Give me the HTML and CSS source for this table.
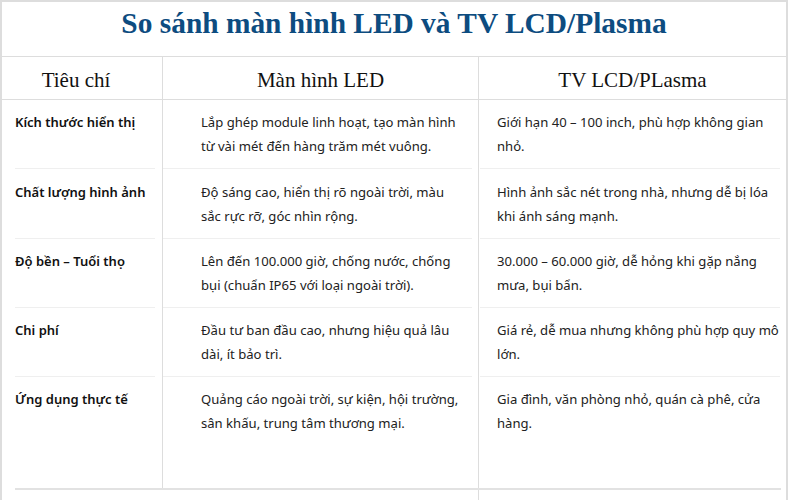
FILE: index.html
```html
<!DOCTYPE html>
<html lang="vi">
<head>
<meta charset="utf-8">
<title>So sánh màn hình LED và TV LCD/Plasma</title>
<link rel="stylesheet" href="styles.css">
</head>
<body>
<div class="table">
  <div class="title">So sánh màn hình LED và TV LCD/Plasma</div>

  <div class="head c1">Tiêu chí</div>
  <div class="head c2">Màn hình LED</div>
  <div class="head c3">TV LCD/PLasma</div>

  <div class="cell c1"><div class="in"><strong>Kích thước hiển thị</strong></div></div>
  <div class="cell c2"><div class="in">Lắp ghép module linh hoạt, tạo màn hình từ vài mét đến hàng trăm mét vuông.</div></div>
  <div class="cell c3"><div class="in">Giới hạn 40 – 100 inch, phù hợp không gian nhỏ.</div></div>

  <div class="cell c1"><div class="in"><strong>Chất lượng hình ảnh</strong></div></div>
  <div class="cell c2"><div class="in">Độ sáng cao, hiển thị rõ ngoài trời, màu sắc rực rỡ, góc nhìn rộng.</div></div>
  <div class="cell c3"><div class="in">Hình ảnh sắc nét trong nhà, nhưng dễ bị lóa khi ánh sáng mạnh.</div></div>

  <div class="cell c1"><div class="in"><strong>Độ bền – Tuổi thọ</strong></div></div>
  <div class="cell c2"><div class="in">Lên đến 100.000 giờ, chống nước, chống bụi (chuẩn IP65 với loại ngoài trời).</div></div>
  <div class="cell c3"><div class="in">30.000 – 60.000 giờ, dễ hỏng khi gặp nắng mưa, bụi bẩn.</div></div>

  <div class="cell c1"><div class="in"><strong>Chi phí</strong></div></div>
  <div class="cell c2"><div class="in">Đầu tư ban đầu cao, nhưng hiệu quả lâu dài, ít bảo trì.</div></div>
  <div class="cell c3"><div class="in">Giá rẻ, dễ mua nhưng không phù hợp quy mô lớn.</div></div>

  <div class="cell c1 last"><div class="in"><strong>Ứng dụng thực tế</strong></div></div>
  <div class="cell c2 last"><div class="in">Quảng cáo ngoài trời, sự kiện, hội trường, sân khấu, trung tâm thương mại.</div></div>
  <div class="cell c3 last"><div class="in">Gia đình, văn phòng nhỏ, quán cà phê, cửa hàng.</div></div>

  <div class="foot"><div class="foot-line"></div></div>
  <div class="foot-c1"></div>
  <div class="foot-c2"></div>
  <div class="foot-c3"></div>
</div>
</body>
</html>
```

FILE: styles.css
```css
html, body {
  margin: 0;
  padding: 0;
  background: #ffffff;
}

body {
  font-family: "Noto Sans", "Open Sans", sans-serif;
  color: #222222;
  width: 788px;
  height: 500px;
  overflow: hidden;
}

.table {
  display: grid;
  grid-template-columns: 160px 316px 308px;
  border: 2px solid #dddddd;
  border-bottom: none;
  width: 784px;
  min-height: 498px;
}

.title {
  grid-column: 1 / -1;
  height: 55px;
  border-bottom: 1px solid #dddddd;
  font-family: "Liberation Serif", "Times New Roman", serif;
  font-weight: bold;
  font-size: 29.4px;
  color: #0d4c80;
  text-align: center;
  line-height: 42px;
  box-sizing: border-box;
}

.head {
  height: 43px;
  box-sizing: border-box;
  border-bottom: 1px solid #dddddd;
  font-family: "Liberation Serif", "Times New Roman", serif;
  font-size: 21px;
  color: #111111;
  text-align: center;
  padding-top: 11px;
  line-height: 24px;
}

.head.c1 {
  padding-right: 12px;
}

.c2, .c3 {
  border-left: 1px solid #dddddd;
}

.cell .in {
  font-size: 13.1px;
  line-height: 24px;
  padding: 10px 0;
  height: 48px;
  border-bottom: 1px solid #efefef;
}

.cell.c1 .in {
  margin: 0 7px 0 13px;
  color: #111111;
}

.cell.c1 strong {
  font-size: 13px;
  font-weight: 600;
}

.cell.c2 .in {
  margin-right: 6px;
  padding-left: 38px;
  padding-right: 9px;
}

.cell.c3 .in {
  margin-left: 1px;
  margin-right: 6px;
  padding-left: 17px;
  padding-right: 0;
}

.cell.last .in {
  height: 90px;
  border-bottom: none;
}

.foot {
  grid-column: 1 / -1;
  height: 0;
  position: relative;
}

.foot-line {
  position: absolute;
  left: 13px;
  right: 5px;
  top: 0;
  border-top: 2px solid #e2e2e2;
}

.foot-c1, .foot-c2 {
  height: 12px;
}

.foot-c3 {
  height: 12px;
  border-left: 1px solid #dddddd;
}
```
